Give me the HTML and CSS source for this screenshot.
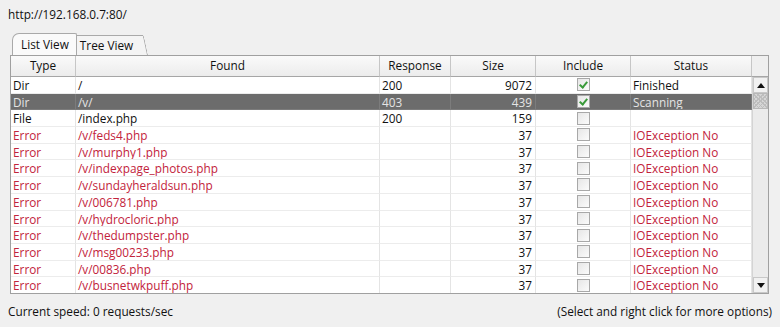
FILE: index.html
```html
<!DOCTYPE html>
<html lang="en">
  <head>
    <meta charset="UTF-8">
    <title>DirBuster results</title>
    <link rel="stylesheet" href="styles.css">
  </head>
  <body>
    <div class="url">http://192.168.0.7:80/</div>

    <div class="tabs">
      <div class="tab tab-active">List View</div>
      <div class="tab tab-slant">Tree View</div>
    </div>

    <div class="panel">
      <div class="head">
        <div class="hcell">Type</div>
        <div class="hcell">Found</div>
        <div class="hcell">Response</div>
        <div class="hcell">Size</div>
        <div class="hcell">Include</div>
        <div class="hcell">Status</div>
        <div class="hcell hcorner"></div>
      </div>

      <div class="body">
        <div class="rows">
          <div class="row">
            <div class="cell">Dir</div><div class="cell">/</div><div class="cell">200</div>
            <div class="cell num">9072</div><div class="cell chk"><span class="box on"></span></div><div class="cell">Finished</div>
          </div>
          <div class="row sel">
            <div class="cell">Dir</div><div class="cell">/v/</div><div class="cell">403</div>
            <div class="cell num">439</div><div class="cell chk"><span class="box on"></span></div><div class="cell">Scanning</div>
          </div>
          <div class="row">
            <div class="cell">File</div><div class="cell">/index.php</div><div class="cell">200</div>
            <div class="cell num">159</div><div class="cell chk"><span class="box"></span></div><div class="cell"></div>
          </div>
          <div class="row err">
            <div class="cell">Error</div><div class="cell">/v/feds4.php</div><div class="cell"></div>
            <div class="cell num">37</div><div class="cell chk"><span class="box"></span></div><div class="cell">IOException No</div>
          </div>
          <div class="row err">
            <div class="cell">Error</div><div class="cell">/v/murphy1.php</div><div class="cell"></div>
            <div class="cell num">37</div><div class="cell chk"><span class="box"></span></div><div class="cell">IOException No</div>
          </div>
          <div class="row err">
            <div class="cell">Error</div><div class="cell">/v/indexpage_photos.php</div><div class="cell"></div>
            <div class="cell num">37</div><div class="cell chk"><span class="box"></span></div><div class="cell">IOException No</div>
          </div>
          <div class="row err">
            <div class="cell">Error</div><div class="cell">/v/sundayheraldsun.php</div><div class="cell"></div>
            <div class="cell num">37</div><div class="cell chk"><span class="box"></span></div><div class="cell">IOException No</div>
          </div>
          <div class="row err">
            <div class="cell">Error</div><div class="cell">/v/006781.php</div><div class="cell"></div>
            <div class="cell num">37</div><div class="cell chk"><span class="box"></span></div><div class="cell">IOException No</div>
          </div>
          <div class="row err">
            <div class="cell">Error</div><div class="cell">/v/hydrocloric.php</div><div class="cell"></div>
            <div class="cell num">37</div><div class="cell chk"><span class="box"></span></div><div class="cell">IOException No</div>
          </div>
          <div class="row err">
            <div class="cell">Error</div><div class="cell">/v/thedumpster.php</div><div class="cell"></div>
            <div class="cell num">37</div><div class="cell chk"><span class="box"></span></div><div class="cell">IOException No</div>
          </div>
          <div class="row err">
            <div class="cell">Error</div><div class="cell">/v/msg00233.php</div><div class="cell"></div>
            <div class="cell num">37</div><div class="cell chk"><span class="box"></span></div><div class="cell">IOException No</div>
          </div>
          <div class="row err">
            <div class="cell">Error</div><div class="cell">/v/00836.php</div><div class="cell"></div>
            <div class="cell num">37</div><div class="cell chk"><span class="box"></span></div><div class="cell">IOException No</div>
          </div>
          <div class="row err">
            <div class="cell">Error</div><div class="cell">/v/busnetwkpuff.php</div><div class="cell"></div>
            <div class="cell num">37</div><div class="cell chk"><span class="box"></span></div><div class="cell">IOException No</div>
          </div>
        </div>

        <div class="scroll">
          <div class="sbtn"><span class="arrow up"></span></div>
          <div class="thumb"></div>
          <div class="track"></div>
          <div class="sbtn"><span class="arrow down"></span></div>
        </div>
      </div>
    </div>

    <div class="footer">
      <span>Current speed: 0 requests/sec</span>
      <span>(Select and right click for more options)</span>
    </div>
  </body>
</html>
```

FILE: styles.css
```css
* {
  box-sizing: border-box;
  margin: 0;
  padding: 0;
}

body {
  width: 780px;
  height: 327px;
  overflow: hidden;
  background-color: #f0f0f0;
  font-family: "Open Sans", "DejaVu Sans", sans-serif;
  font-size: 11.8px;
  color: #111;
}

.url {
  height: 29px;
  padding: 6px 0 0 8px;
  line-height: 16px;
}

/* tabs */
.tabs {
  display: flex;
  align-items: flex-end;
  height: 26px;
  padding-left: 12px;
}

.tab {
  height: 20px;
  line-height: 18px;
  border: 1px solid #a9a9a9;
  border-bottom: none;
}

.tab-active {
  height: 22px;
  padding: 1px 7px 0 8px;
  background-color: #fafafa;
  border-top-left-radius: 7px;
  border-top-right-radius: 2px;
  position: relative;
  z-index: 1;
}

.tab-slant {
  padding: 0 10px 0 3px;
  background-color: #f4f4f4;
  border-left: none;
  border-right: none;
  position: relative;
}

.tab-slant::after {
  content: "";
  position: absolute;
  top: -1px;
  right: -3px;
  width: 6px;
  height: 20px;
  border-right: 1px solid #a9a9a9;
  border-top: 1px solid #a9a9a9;
  border-top-right-radius: 3px;
  background-color: #f4f4f4;
  transform: skewX(12deg);
  z-index: -1;
}

/* table */
.panel {
  margin: 0 11px 0 10px;
  border: 1px solid #a0a0a0;
  background-color: #fff;
}

.head,
.row {
  display: grid;
  grid-template-columns: 65px 304px 71px 85px 95px 121px;
}

.head {
  grid-template-columns: 65px 304px 71px 85px 95px 121px 16px;
  height: 21px;
}

.hcell {
  text-align: center;
  line-height: 19px;
  background: linear-gradient(#fafafa, #ececec);
  border-right: 1px solid #c6c6c6;
  border-bottom: 1px solid #a6a6a6;
}

.hcorner {
  border-right: none;
  background: #efefef;
}

.body {
  display: flex;
  height: 216px;
  overflow: hidden;
}

.rows {
  width: 741px;
}

.row {
  height: 16.7px;
  line-height: 16px;
}

.cell {
  padding: 0 2px;
  border-right: 1px solid #e4e4e4;
  border-bottom: 1px solid #ececec;
  white-space: nowrap;
  overflow: hidden;
}

.num {
  text-align: right;
  padding-right: 3px;
}

.chk {
  display: flex;
  justify-content: center;
  align-items: center;
}

.err {
  color: #c2233b;
}

.err .num {
  color: #111;
}

.sel {
  background-color: #6c6c6c;
  color: #e4e4e4;
}

.sel .cell {
  border-color: #7c7c7c;
}

.box {
  width: 13px;
  height: 13px;
  border: 1px solid #a8a8a8;
  background: linear-gradient(135deg, #e6e6e6, #fbfbfb);
  position: relative;
}

.box.on::after {
  content: "";
  position: absolute;
  left: 3px;
  top: 1px;
  width: 3px;
  height: 6px;
  border: solid #3a9a3a;
  border-width: 0 2px 2px 0;
  transform: rotate(40deg);
}

/* scrollbar */
.scroll {
  width: 16px;
  display: flex;
  flex-direction: column;
  background-color: #ebebeb;
  border-left: 1px solid #d4d4d4;
}

.sbtn {
  height: 16px;
  display: flex;
  align-items: center;
  justify-content: center;
  border: 1px solid #c8c8c8;
  background-color: #f1f1f1;
}

.thumb {
  height: 16px;
  border: 1px solid #b8b8b8;
  background-color: #d6d6d6;
  background-image: repeating-linear-gradient(45deg, #bdbdbd 0 1px, transparent 1px 3px),
    repeating-linear-gradient(-45deg, #bdbdbd 0 1px, transparent 1px 3px);
}

.track {
  flex: 1;
}

.arrow {
  width: 0;
  height: 0;
  border-left: 4px solid transparent;
  border-right: 4px solid transparent;
}

.arrow.up {
  border-bottom: 5px solid #111;
}

.arrow.down {
  border-top: 5px solid #111;
}

.footer {
  display: flex;
  justify-content: space-between;
  padding: 9px 8px 0 8px;
  line-height: 16px;
}
```
